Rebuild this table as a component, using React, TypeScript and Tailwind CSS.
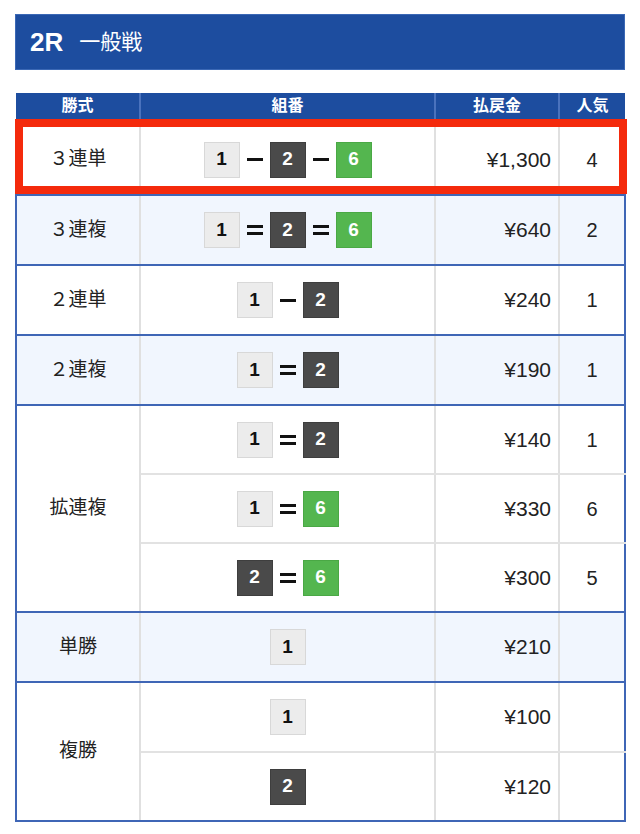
import React from "react";

type B = 1 | 2 | 6;
type Row = { label?: string; rowSpan?: number; combo: B[]; sep?: "-" | "="; pay: string; pop?: string; bg: string; firstSub?: boolean; lastSub?: boolean };

const font = { fontFamily: '"Liberation Sans", "Noto Sans CJK JP", Arial, sans-serif' };

function Badge({ n }: { n: B }) {
  const cls =
    n === 1
      ? "bg-[#ececec] text-[#111] border border-[#d8d8d8]"
      : n === 2
      ? "bg-[#4a4a4a] text-white border border-[#3e3e3e]"
      : "bg-[#54b64f] text-white border border-[#4aa845]";
  return (
    <div className={`w-[36px] h-[36px] flex items-center justify-center text-[19px] font-bold ${cls}`}>{n}</div>
  );
}

function Sep({ s }: { s: "-" | "=" }) {
  if (s === "-") return <div className="w-[16px] h-[3px] bg-[#111]" />;
  return (
    <div className="flex flex-col gap-[4px]">
      <div className="w-[16px] h-[3px] bg-[#111]" />
      <div className="w-[16px] h-[3px] bg-[#111]" />
    </div>
  );
}

const rows: Row[] = [
  { label: "３連単", combo: [1, 2, 6], sep: "-", pay: "¥1,300", pop: "4", bg: "bg-white" },
  { label: "３連複", combo: [1, 2, 6], sep: "=", pay: "¥640", pop: "2", bg: "bg-[#f1f6fe]" },
  { label: "２連単", combo: [1, 2], sep: "-", pay: "¥240", pop: "1", bg: "bg-white" },
  { label: "２連複", combo: [1, 2], sep: "=", pay: "¥190", pop: "1", bg: "bg-[#f1f6fe]" },
  { label: "拡連複", rowSpan: 3, combo: [1, 2], sep: "=", pay: "¥140", pop: "1", bg: "bg-white", firstSub: true },
  { combo: [1, 6], sep: "=", pay: "¥330", pop: "6", bg: "bg-white" },
  { combo: [2, 6], sep: "=", pay: "¥300", pop: "5", bg: "bg-white", lastSub: true },
  { label: "単勝", combo: [1], pay: "¥210", bg: "bg-[#f1f6fe]" },
  { label: "複勝", rowSpan: 2, combo: [1], pay: "¥100", bg: "bg-white", firstSub: true },
  { combo: [2], pay: "¥120", bg: "bg-white", lastSub: true },
];

export default function App() {
  return (
    <div className="w-[640px] h-[834px] bg-white relative" style={font}>
      <div className="pt-[14px] px-[15px]">
        <div className="h-[56px] bg-[#1d4d9f] border border-[#3b68b5] flex items-center pl-[14px] gap-[16px]">
          <span className="text-white text-[26px] font-bold">2R</span>
          <span className="text-white text-[21px]">一般戦</span>
        </div>
        <table className="mt-[23px] w-[609px] border-collapse table-fixed">
          <colgroup>
            <col className="w-[124px]" />
            <col className="w-[295px]" />
            <col className="w-[124px]" />
            <col className="w-[66px]" />
          </colgroup>
          <thead>
            <tr className="h-[32px] bg-[#1d4d9f] text-white text-[16px] font-bold">
              <th className="border-r-2 border-[#4a72bd] pb-[6px] font-bold">勝式</th>
              <th className="border-r-2 border-[#4a72bd] pb-[6px] font-bold">組番</th>
              <th className="border-r-2 border-[#4a72bd] pb-[6px] font-bold">払戻金</th>
              <th className="pb-[6px] font-bold">人気</th>
            </tr>
          </thead>
          <tbody>
            {rows.map((r, i) => {
              const isSubNotLast = (r.firstSub || (!r.label && !r.lastSub)) && !r.lastSub;
              const bottom = isSubNotLast ? "border-b-2 border-b-[#e2e2e2]" : "border-b-2 border-b-[#3f66b6]";
              const h = r.rowSpan === 3 || (!r.label && !r.rowSpan) ? "h-[69px]" : "h-[70px]";
              return (
                <tr key={i} className={`${r.bg} ${h} text-[#222] text-[21px]`}>
                  {r.label && (
                    <td
                      rowSpan={r.rowSpan}
                      className="text-center text-[19px] border-l-2 border-l-[#3f66b6] border-r-2 border-r-[#e0e0e0] border-b-2 border-b-[#3f66b6] align-middle"
                    >
                      {r.label}
                    </td>
                  )}
                  <td className={`border-r-2 border-r-[#e0e0e0] ${bottom}`}>
                    <div className="flex items-center justify-center gap-[7px]">
                      {r.combo.map((n, j) => (
                        <React.Fragment key={j}>
                          {j > 0 && r.sep && <Sep s={r.sep} />}
                          <Badge n={n} />
                        </React.Fragment>
                      ))}
                    </div>
                  </td>
                  <td className={`text-right pr-[7px] border-r-2 border-r-[#e0e0e0] ${bottom}`}>{r.pay}</td>
                  <td className={`text-center text-[20px] border-r-2 border-r-[#3f66b6] ${bottom}`}>{r.pop ?? ""}</td>
                </tr>
              );
            })}
          </tbody>
        </table>
      </div>
      <div className="absolute left-[15px] top-[119px] w-[612px] h-[75px] border-[8px] border-[#f42a0c] pointer-events-none" />
    </div>
  );
}
